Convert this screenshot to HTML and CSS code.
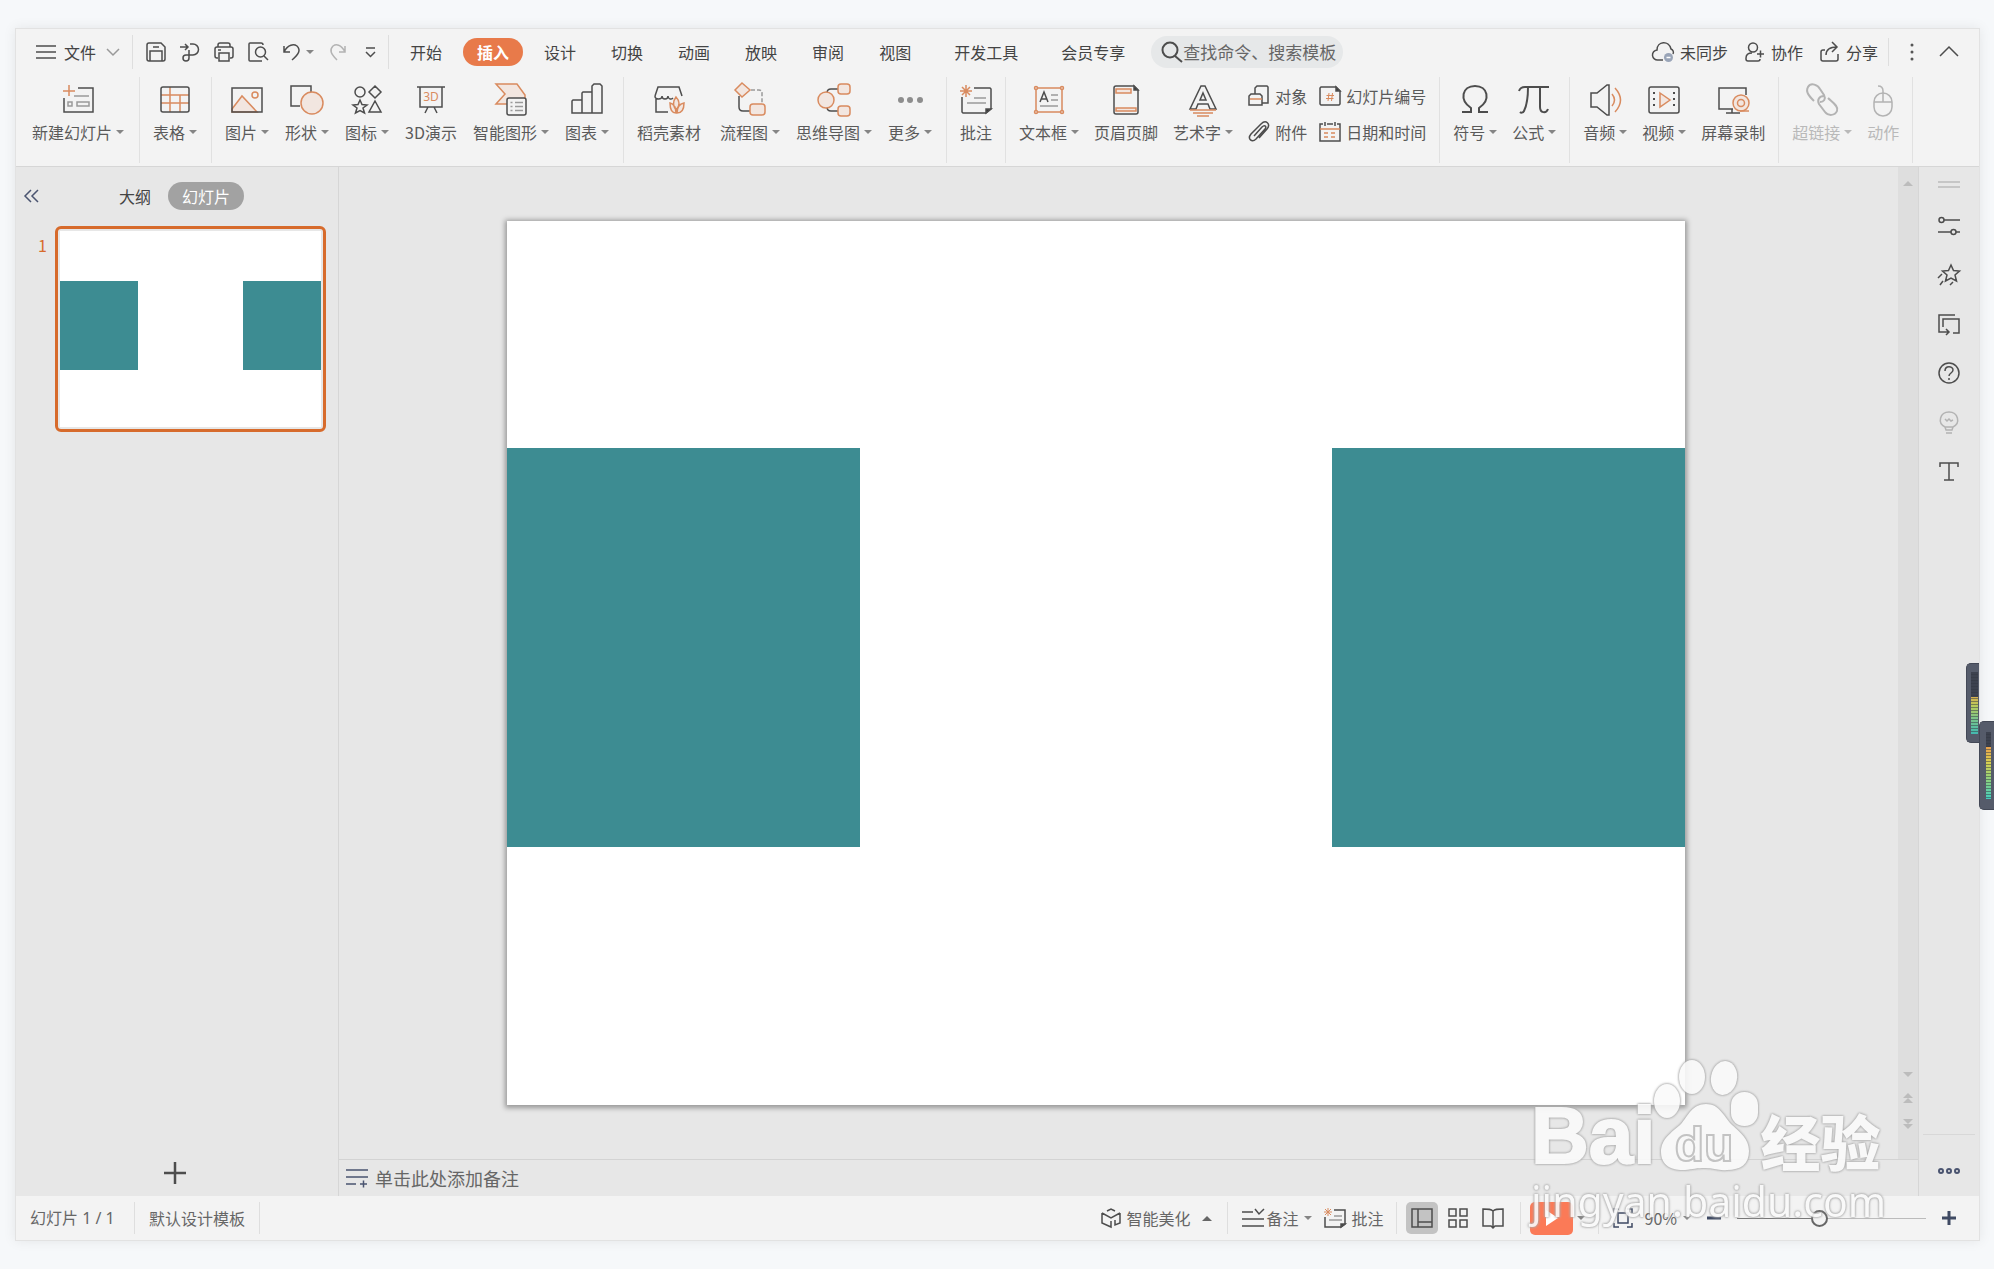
FILE: index.html
```html
<!DOCTYPE html>
<html lang="zh-CN">
<head>
<meta charset="utf-8">
<title>演示文稿</title>
<link rel="stylesheet" href="styles.css">
</head>
<body>
<div class="window">
  <header class="topbar">
    <button class="file-menu">
      <svg class="i20" viewBox="0 0 20 20"><path d="M0 4h20M0 10h20M0 16h20"/></svg>
      文件
      <svg class="chev" viewBox="0 0 14 8"><path d="M1 1l6 6 6-6"/></svg>
    </button>
    <div class="quick">
      <button aria-label="保存"><svg class="i20" viewBox="0 0 20 20"><path d="M3 1h12l4 4v12a2 2 0 0 1-2 2H3a2 2 0 0 1-2-2V3a2 2 0 0 1 2-2zM4 19V9h12v10M7 5h6"/></svg></button>
      <button aria-label="输出PDF"><svg class="i20" viewBox="0 0 20 20"><path d="M0 5h8M5 2l3 3-3 3M10 2h3a5 5 0 0 1 0 11H6a3 3 0 1 0 3 3V8"/></svg></button>
      <button aria-label="打印"><svg class="i20" viewBox="0 0 20 20"><path d="M4 5V3a2 2 0 0 1 2-2h8a2 2 0 0 1 2 2v2M4 16H3a2 2 0 0 1-2-2V7a2 2 0 0 1 2-2h14a2 2 0 0 1 2 2v7a2 2 0 0 1-2 2h-1M5 11h10v8H5zM4 8h3"/></svg></button>
      <button aria-label="打印预览"><svg class="i20" viewBox="0 0 20 20"><path d="M15 3a2 2 0 0 0-2-2H2a1 1 0 0 0-1 1v16a1 1 0 0 0 1 1h12M16 14l4 4"/><circle cx="12.500" cy="10" r="5"/></svg></button>
      <button aria-label="撤销"><svg class="i20" viewBox="0 0 20 20"><path d="M2 4v6h6M2 10C6 2 12 2 15 4c4 4 2 8-5 14"/></svg><i class="caret"></i></button>
      <button aria-label="恢复" disabled><svg class="i20" viewBox="0 0 20 20"><path d="M17 4v6h-6M17 10C13 2 8 2 5 4c-4 4-2 8 4 14"/></svg></button>
      <button aria-label="自定义"><svg class="i20" viewBox="0 0 20 20"><path d="M6 6h9M6 10l4.500 4.500L15 10"/></svg></button>
    </div>
    <nav class="tabs">
      <button>开始</button>
      <button class="active">插入</button>
      <button>设计</button>
      <button>切换</button>
      <button>动画</button>
      <button>放映</button>
      <button>审阅</button>
      <button>视图</button>
      <button class="wide">开发工具</button>
      <button class="wide">会员专享</button>
    </nav>
    <label class="search">
      <svg class="i22" viewBox="0 0 22 22"><g stroke-width="2"><circle cx="9" cy="9" r="7.500"/><path d="M14 15l7 6"/></g></svg>
      <input type="text" aria-label="搜索" placeholder="查找命令、搜索模板">
    </label>
    <div class="account">
      <button><svg class="i22" viewBox="0 0 22 22"><path d="M11 19H6a5 5 0 0 1-1-10c0-9 12-10 14-1 2 1 3 3 2 5"/><circle cx="16.500" cy="16.500" r="4.500" fill="#9aa5b8" stroke="none"/><path d="M14.500 16.500h4" stroke="#fff"/></svg>未同步</button>
      <button><svg class="i20" viewBox="0 0 20 20"><circle cx="8" cy="5.500" r="4.500"/><path d="M7 11c-4 0-6 2-6 5v1c0 1 1 2 2 2h10c1 0 2-1 2-2M12 12h7M15.500 8.500v7"/></svg>协作</button>
      <button><svg class="i20" viewBox="0 0 20 20"><path d="M5 8H3a2 2 0 0 0-2 2v7a2 2 0 0 0 2 2h13a2 2 0 0 0 2-2v-5M6 13c0-5 3-8 11-8M12 0l5 5-5 5"/></svg>分享</button>
    </div>
    <div class="win-tools">
      <button aria-label="更多"><svg class="i20" viewBox="0 0 20 20"><g fill="#555" stroke="none"><circle cx="10" cy="3" r="1.500"/><circle cx="10" cy="10" r="1.500"/><circle cx="10" cy="17" r="1.500"/></g></svg></button>
      <button aria-label="收起功能区"><svg class="i20" viewBox="0 0 20 20"><path d="M1 14l9-9 9 9"/></svg></button>
    </div>
  </header>

  <div class="ribbon">
    <div class="group">
      <button class="tool"><svg viewBox="0 0 36 36"><path d="M18 6h15v24H4V16"/><path class="o" d="M9 3v11M3 9h12"/><path class="g" d="M14 14h15M8 20h4v4H8zM17 20h12v4H17z"/></svg><span>新建幻灯片<i class="caret"></i></span></button>
    </div>
    <div class="group">
      <button class="tool"><svg viewBox="0 0 36 36"><path class="o" d="M13 5v25M23 13v17M4 13h28M4 21h28"/><rect x="4" y="5" width="28" height="25" rx="2"/></svg><span>表格<i class="caret"></i></span></button>
    </div>
    <div class="group">
      <button class="tool"><svg viewBox="0 0 36 36"><path class="of" d="M3 27l10-13 15 16H3z"/><circle class="o" cx="26" cy="13" r="3"/><rect x="3" y="6" width="30" height="24"/></svg><span>图片<i class="caret"></i></span></button>
      <button class="tool"><svg viewBox="0 0 36 36"><path d="M22 12V4H2v20h9"/><circle class="of" cx="23" cy="21" r="11"/></svg><span>形状<i class="caret"></i></span></button>
      <button class="tool"><svg viewBox="0 0 36 36"><circle cx="11" cy="10" r="5"/><path d="M26 4l6 6-6 6-6-6zM26 19l6 11H20zM11 18l2 4.500 5 .5-4 3 1.500 5-4.500-2.500L6.500 31 8 26l-4-3 5-.5z"/></svg><span>图标<i class="caret"></i></span></button>
      <button class="tool"><svg viewBox="0 0 36 36"><path d="M4 5h28M7 5v20h22V5M15 25l-3 6M21 25l3 6"/><text x="18" y="19" class="ot" font-size="12" text-anchor="middle">3D</text></svg><span>3D演示</span></button>
      <button class="tool"><svg viewBox="0 0 36 36"><path class="of" d="M3 2h21l8 11v9H3l9-10z"/><rect x="14" y="16" width="19" height="17" rx="2" fill="#f3f3f3"/><path class="g" d="M17.500 20.500h2M17.500 24.500h2M17.500 28.500h2M22 20.500h8M22 24.500h8M22 28.500h8"/></svg><span>智能图形<i class="caret"></i></span></button>
      <button class="tool"><svg viewBox="0 0 36 36"><path d="M3 31V19l1-1h9V11l1-1h9V4l2-2h6l2 2v27zM13 18v13M23 10v21"/></svg><span>图表<i class="caret"></i></span></button>
    </div>
    <div class="group assets">
      <button class="tool"><svg viewBox="0 0 36 36"><path d="M4 14l3-9h21l3 9M4 14c0 4 7 4 7 0 0 4 6 4 6 0 0 3 3 4 5 2M5 17v13h12"/><path class="of" d="M25 15c4 4 4 9 0 13-3-4-3-9 0-13zM19 21c4 1 6 5 6 10-4 0-6-4-6-10zM33 21c-5 1-7 5-7 10 5 0 7-4 7-10z"/></svg><span>稻壳素材</span></button>
      <button class="tool"><svg viewBox="0 0 36 36"><path d="M7 14v11q0 4 4 4h7"/><path class="g" stroke-dasharray="4 2" d="M19 8h8q3 0 3 3v11"/><path class="of" d="M10 1l8 7-8 7-7-7z"/><rect class="of" x="18" y="22" width="15" height="11" rx="3"/></svg><span>流程图<i class="caret"></i></span></button>
      <button class="tool"><svg viewBox="0 0 36 36"><path d="M11 11q0-4 4-4h7M11 25q0 4 4 4h7"/><circle class="of" cx="10" cy="18" r="8"/><rect class="of" x="22" y="2" width="12" height="10" rx="3"/><rect class="of" x="22" y="24" width="12" height="10" rx="3"/></svg><span>思维导图<i class="caret"></i></span></button>
      <button class="tool"><svg viewBox="0 0 36 36"><g fill="#8d8d8d" stroke="none"><circle cx="9" cy="18" r="3"/><circle cx="18" cy="18" r="3"/><circle cx="28" cy="18" r="3"/></g></svg><span>更多<i class="caret"></i></span></button>
    </div>
    <div class="group tight">
      <button class="tool"><svg viewBox="0 0 36 36"><path d="M16 6h16l1 1v20l-5 4H5l-1-1V15"/><path d="M28 31v-4h5z" fill="#333"/><path class="g" d="M16 16h12M9 21h19"/><path class="o" d="M8 3v12M2 9h12M4 5l8 8M12 5l-8 8"/></svg><span>批注</span></button>
    </div>
    <div class="group tight">
      <button class="tool"><svg viewBox="0 0 36 36"><path class="o" d="M5 6h26v24H5z"/><g class="of"><circle cx="5" cy="6" r="1.500"/><circle cx="31" cy="6" r="1.500"/><circle cx="5" cy="30" r="1.500"/><circle cx="31" cy="30" r="1.500"/></g><path d="M9 20l4-10 4 10M10.500 17h5"/><path class="g" d="M20 13h7M20 18h7M9 24h18"/></svg><span>文本框<i class="caret"></i></span></button>
      <button class="tool"><svg viewBox="0 0 36 36"><path d="M8 4h18l4 4v22a2 2 0 0 1-2 2H8a2 2 0 0 1-2-2V6a2 2 0 0 1 2-2z"/><path d="M26 4v4h4z" fill="#333"/><path class="of" d="M8 7h15v4H8zM8 26h20v3H8z"/></svg><span>页眉页脚</span></button>
      <button class="tool"><svg viewBox="0 0 36 36"><path d="M16 4h4l11 23h-6l-2-5H13l-2 5H5zM18 11l3 7h-6z"/><path class="o" d="M5 28h26M8 31h20M12 34h12"/></svg><span>艺术字<i class="caret"></i></span></button>
      <div class="small-tools">
        <button><svg class="i22" viewBox="0 0 22 22"><path d="M7 9V3l2-2h10l1 1v16h-6M3 9h9l2 2v9H1v-9z"/><path class="o" d="M2 14h12"/></svg>对象</button>
        <button><svg class="i22" viewBox="0 0 22 22"><path d="M2 2h15l4 4v13l-1 1H2l-1-1V3z"/><path d="M17 2v4h4z" fill="#333"/><path class="o" stroke-width="1" d="M10 8l-1 8M13.500 8l-1 8M7.500 10.500h7.500M7 13.500h7.500"/></svg>幻灯片编号</button>
        <button><svg class="i22" viewBox="0 0 22 22"><path d="M6 15l8-9c3-3 5 0 3 2l-9 10c-4 4-9 0-5-5L13 3c5-5 10 0 6 5l-8 9"/></svg>附件</button>
        <button><svg class="i22" viewBox="0 0 22 22"><path d="M4 3H1v17h20V3h-3M8 3h6M6 1v4M16 1v4"/><path class="o" d="M1 8h20M5 12h4M5 16h4M12 12h4M12 16h4"/></svg>日期和时间</button>
      </div>
    </div>
    <div class="group tight">
      <button class="tool"><svg viewBox="0 0 36 36"><path stroke-width="2" d="M5 30h9v-4C2 18 5 4 18 4s16 14 4 22v4h9"/></svg><span>符号<i class="caret"></i></span></button>
      <button class="tool"><svg viewBox="0 0 36 36"><path stroke-width="2" d="M3 9c1-3 3-4 6-4h24M12 5c0 12-1 18-4 24-1 2-3 2-4 1M24 5v20c0 6 6 7 8 2"/></svg><span>公式<i class="caret"></i></span></button>
    </div>
    <div class="group tight">
      <button class="tool"><svg viewBox="0 0 36 36"><path d="M4 11h6L20 3h2v30h-2l-10-8H4z"/><path class="o" d="M25 12q5 6 0 12M28 6q11 12 0 24"/></svg><span>音频<i class="caret"></i></span></button>
      <button class="tool"><svg viewBox="0 0 36 36"><rect x="3" y="5" width="30" height="26" rx="2"/><path class="of" d="M14 11l10 7-10 7z"/><path stroke-dasharray="2 4" stroke-width="2" d="M8 10v18M28 10v18"/></svg><span>视频<i class="caret"></i></span></button>
      <button class="tool"><svg viewBox="0 0 36 36"><path d="M31 13V6H4v21h14M17 27v4M11 31h14"/><circle class="of" cx="26" cy="21" r="8"/><circle class="o" cx="26" cy="21" r="3.500"/><path class="o" d="M25 29h9"/></svg><span>屏幕录制</span></button>
    </div>
    <div class="group tight">
      <button class="tool" disabled><svg viewBox="0 0 36 36"><g stroke-width="2"><path d="M10 19c-4-4-9-9-6-14s10-2 12 2l4 6c2 4 0 7-4 7"/><path d="M24 16c4 4 11 8 9 13s-9 5-12 1l-6-8c-2-4 0-8 5-8"/></g></svg><span>超链接<i class="caret"></i></span></button>
      <button class="tool" disabled><svg viewBox="0 0 36 36"><rect x="9" y="11" width="18" height="23" rx="9"/><path d="M9 20h18M18 20V9c0-3-2-5-5-5"/></svg><span>动作</span></button>
    </div>
  </div>

  <main class="work">
    <aside class="slides">
      <div class="slides-head">
        <button class="collapse" aria-label="收起"><svg class="i16" viewBox="0 0 16 16"><path d="M7 2L1 8l6 6M14 2L8 8l6 6"/></svg></button>
        <button class="outline">大纲</button>
        <button class="pill">幻灯片</button>
      </div>
      <div class="thumb-row">
        <span class="num">1</span>
        <button class="thumb" aria-label="幻灯片 1"><span class="slide mini"><b class="shape left"></b><b class="shape right"></b></span></button>
      </div>
      <button class="add" aria-label="新建幻灯片"><svg class="i22" viewBox="0 0 22 22"><path d="M11 0v22M0 11h22"/></svg></button>
    </aside>

    <section class="editor">
      <div class="stage">
        <div class="canvas">
          <div class="slide"><b class="shape left"></b><b class="shape right"></b></div>
        </div>
        <div class="scroll">
          <i class="up"></i>
          <div class="scroll-end"><i class="down"></i><span><i class="up"></i><i class="up"></i></span><span><i class="down"></i><i class="down"></i></span></div>
        </div>
      </div>
      <button class="notes"><svg class="i22" viewBox="0 0 22 22"><path d="M0 3h22M0 10h22M0 17h10M14 17h7M17.500 13.500v7"/></svg>单击此处添加备注</button>
    </section>

    <aside class="side">
      <span class="grip"></span>
      <button aria-label="属性"><svg class="i22" viewBox="0 0 22 22"><circle cx="3.500" cy="5" r="2.500"/><path d="M6 5h16M0 17h13M18 17h4"/><circle cx="15.500" cy="17" r="2.500"/></svg></button>
      <button aria-label="动画"><svg class="i22" viewBox="0 0 22 22"><path d="M13 1l2.500 5.500 6 .5-4.500 4 1.500 6-5.500-3-5.500 3L9 11 4.500 7l6-.5zM4 10l-4 4M5 17l-3 4M15 18l-3 3"/></svg></button>
      <button aria-label="切换"><svg class="i22" viewBox="0 0 22 22"><path d="M17 2H1v17h10M8 16l3 3-3 3M5 14V6h16v14h-6"/></svg></button>
      <button aria-label="帮助"><svg class="i22" viewBox="0 0 22 22"><circle cx="11" cy="11" r="10"/><path d="M7 9c0-6 8-5 8-1 0 3-4 3-4 6M11 16v2"/></svg></button>
      <button aria-label="提示" disabled><svg class="i22" viewBox="0 0 22 22"><path d="M7 16C-1 12 2 1 11 1s12 11 4 15zM7 16l1 3h6l1-3M8 22h6M7 8l2 2 2-2 2 2 2-1"/></svg></button>
      <button aria-label="文字"><svg class="i22" viewBox="0 0 22 22"><path d="M2 7V3h18v4M11 3v17M6 20h10"/></svg></button>
      <button class="more" aria-label="更多"><svg class="i22" viewBox="0 0 22 22"><g stroke-width="2"><circle cx="3" cy="11" r="2"/><circle cx="11" cy="11" r="2"/><circle cx="19" cy="11" r="2"/></g></svg></button>
    </aside>
  </main>

  <footer class="status">
    <span class="cell page">幻灯片 1 / 1</span>
    <span class="cell">默认设计模板</span>
    <div class="status-tools">
      <div class="seg beautify"><button><svg class="i20" viewBox="0 0 20 20"><path d="M6 3l4-2 4 2M1 5l9 5 9-5M1 5v10l9 4v-6M19 5v10l-5 2v-5"/></svg>智能美化<i class="caret flip"></i></button></div>
      <div class="seg annotate">
        <button><svg class="i22" viewBox="0 0 22 22"><path d="M0 5h11M13 2l4 5 5-5M0 12h22M0 19h22"/></svg>备注<i class="caret"></i></button>
        <button><svg class="i22" viewBox="0 0 22 22"><path d="M10 3h11v14l-4 3H1V10"/><path d="M17 20v-3h4z" fill="#333"/><path class="g" d="M10 9h8M5 13h13"/><path class="o" stroke-width="1" d="M4 1v8M0 5h8M1 2l6 6M7 2L1 8"/></svg>批注</button>
      </div>
      <div class="seg views">
        <button class="on" aria-label="普通视图"><svg class="i20" viewBox="0 0 20 20"><path d="M0 1h20v18H0zM6 1v18M6 14h14"/></svg></button>
        <button aria-label="浏览视图"><svg class="i20" viewBox="0 0 20 20"><path d="M1 1h7v7H1zM12 1h7v7h-7zM1 12h7v7H1zM12 12h7v7h-7z"/></svg></button>
        <button aria-label="阅读视图"><svg class="i22" viewBox="0 0 22 22"><path d="M11 4C9 2 7 2 1 2v17h8l2 2 2-2h8V2c-6 0-8 0-10 2zM11 4v16"/></svg></button>
      </div>
      <div class="seg playbox"><button class="play" aria-label="放映"><svg class="i16" viewBox="0 0 16 16"><path d="M3 0l12 8-12 8z" fill="#fff" stroke="none"/></svg></button><i class="caret"></i></div>
      <div class="zoom">
        <button aria-label="适应窗口"><svg class="i20" viewBox="0 0 20 20"><path d="M1 5V1h5M14 1h5v4M19 15v4h-5M6 19H1v-4M5 5h10v10H5z"/></svg></button>
        <button class="pct">90%<i class="caret"></i></button>
        <button aria-label="缩小"><svg class="i14" viewBox="0 0 14 14"><path stroke-width="3" d="M0 7h14"/></svg></button>
        <input type="range" min="0" max="100" value="43" aria-label="缩放">
        <button aria-label="放大"><svg class="i14" viewBox="0 0 14 14"><path stroke-width="3" d="M0 7h14M7 0v14"/></svg></button>
      </div>
    </div>
  </footer>
</div>

<div class="meter m1"><i></i></div>
<div class="meter m2"><i></i></div>

<div class="mark">
  <div class="brand">
    <span class="bai">Bai</span>
    <svg class="paw" viewBox="0 0 106 116"><g class="pads"><ellipse cx="14" cy="43" rx="13" ry="17"/><ellipse cx="39" cy="19" rx="13" ry="17"/><ellipse cx="71" cy="20" rx="13" ry="17" transform="rotate(10 71 20)"/><rect x="78" y="34" width="27" height="34" rx="13"/><path d="M53 46c-14 0-18 12-25 20C18 75 8 81 8 94c0 14 12 19 24 18 8-1 12-2 20-2s14 3 22 2c14 0 22-6 22-19 0-12-9-19-18-27-8-9-12-20-25-20z"/></g><text x="51" y="103" text-anchor="middle" class="du">du</text></svg>
    <span class="jy">经验</span>
  </div>
  <div class="url">jingyan.baidu.com</div>
</div>
</body>
</html>
```
FILE: styles.css
```css
* { box-sizing: border-box; }

body {
  margin: 0;
  min-height: 100vh;
  padding: 28px 14px 28px 15px;
  display: flex;
  background: #f6f8fa;
  color: #5a5a5a;
  font: 16px/20px "Noto Sans CJK SC", sans-serif;
  position: relative;
  overflow-x: hidden;
}

button {
  border: 0;
  padding: 0;
  background: none;
  color: inherit;
  font: inherit;
  display: flex;
  align-items: center;
  white-space: nowrap;
}

svg {
  display: block;
  flex: none;
  fill: none;
  stroke: #4d4d4d;
  stroke-width: 1.5;
  overflow: visible;
}
.i14 { width: 14px; height: 14px; }
.i16 { width: 16px; height: 16px; }
.i20 { width: 20px; height: 20px; }
.i22 { width: 22px; height: 22px; }
.o { stroke: #d98b5f; fill: none; }
.of { stroke: #d98b5f; fill: #f2e6e0; }
.g { stroke: #9a9a9a; }
.ot { fill: #d98b5f; stroke: none; font-family: "Noto Sans", sans-serif; }
button:disabled { color: #b9b9b9; }
button:disabled svg { stroke: #b3b3b3; }

.caret {
  display: inline-block;
  flex: none;
  width: 0;
  height: 0;
  border: 4px solid transparent;
  border-top-color: #858585;
  border-bottom: 0;
  margin-left: 4px;
}
button:disabled .caret { border-top-color: #b9b9b9; }
.caret.flip {
  border: 5px solid transparent;
  border-bottom-color: #666;
  border-top: 0;
}

.window {
  flex: 1;
  min-width: 0;
  display: flex;
  flex-direction: column;
  border: 1px solid #e2e2e2;
  background: #f3f3f3;
  box-shadow: 0 0 12px rgba(0, 0, 0, .08);
}

/* Menu row */
.topbar {
  display: flex;
  align-items: center;
  height: 46px;
  padding-right: 20px;
  color: #444;
}
.file-menu {
  height: 34px;
  padding: 0 12px 0 20px;
  gap: 8px;
  border-right: 1px solid #dedede;
}
.chev { width: 14px; height: 8px; margin-left: 2px; stroke: #999; }
.quick {
  display: flex;
  align-items: center;
  gap: 14px;
  height: 34px;
  padding: 0 8px 0 13px;
  border-right: 1px solid #dedede;
}
.quick button:last-child { margin-left: -2px; }
.tabs { display: flex; gap: 7px; margin-left: 7px; }
.tabs button {
  height: 28px;
  padding: 0 14px;
  border-radius: 14px;
}
.tabs .wide { margin-left: 8px; }
.tabs .active { background: #e87a4a; color: #fff; font-weight: 700; }
.search {
  display: flex;
  align-items: center;
  width: 192px;
  height: 32px;
  margin-left: 12px;
  padding-left: 10px;
  border-radius: 16px;
  background: #e6e8e9;
}
.search input {
  flex: 1;
  min-width: 0;
  border: 0;
  padding: 0;
  background: none;
  font: 17px/24px "Noto Sans CJK SC", sans-serif;
  outline: 0;
}
.search input::placeholder { color: #666; opacity: 1; }
.account { display: flex; gap: 17px; margin-left: auto; }
.account button { gap: 6px; }
.win-tools {
  display: flex;
  gap: 17px;
  height: 28px;
  margin-left: 10px;
  padding-left: 13px;
  border-left: 1px solid #dedede;
}

/* Ribbon */
.ribbon {
  display: flex;
  height: 92px;
  padding: 2px 0 3px 3px;
  border-bottom: 1px solid #d6d6d6;
}
.group {
  display: flex;
  align-items: flex-start;
  gap: 16px;
  padding: 5px 14px 0 13px;
  border-right: 1px solid #e1e1e1;
}
.group:first-child { padding-right: 15px; }
.assets .tool:first-child { margin-right: 3px; }
.tight { gap: 15px; padding-right: 13px; }
.tool { flex-direction: column; gap: 4px; }
.tool > svg { width: 36px; height: 36px; margin: 0 -2px; }
.tool span { display: flex; align-items: center; }
.small-tools {
  display: grid;
  grid-template-columns: auto auto;
  gap: 14px 12px;
  padding-top: 3px;
}
.small-tools button { gap: 5px; }

/* Work area */
.work { flex: 1; display: flex; background: #e7e7e7; min-height: 0; }
.slides {
  width: 323px;
  display: flex;
  flex-direction: column;
  border-right: 1px solid #d6d6d6;
}
.slides-head {
  display: flex;
  align-items: center;
  padding: 15px 8px 16px;
}
.outline { margin-left: 79px; color: #444; }
.pill {
  height: 28px;
  margin-left: 17px;
  padding: 0 14px;
  border-radius: 14px;
  background: #a2a2a2;
  color: #fff;
}
.collapse svg, .notes svg, .more svg { stroke: #4a5470; }
.thumb-row {
  display: flex;
  gap: 8px;
  padding: 0 12px 0 22px;
}
.num { padding-top: 9px; color: #d76b2c; width: 9px; }
.thumb {
  flex: 1;
  border: 3px solid #d76b2c;
  border-radius: 6px;
  padding: 2px;
}
.slide {
  display: block;
  position: relative;
  width: 100%;
  aspect-ratio: 4 / 3;
  background: #fff;
  box-shadow: 0 1px 5px 2px rgba(0, 0, 0, .35);
}
.slide.mini { box-shadow: none; }
.shape {
  position: absolute;
  top: 25.7%;
  width: 30%;
  height: 45.2%;
  background: #3d8c92;
}
.shape.left { left: 0; }
.shape.right { right: 0; }
.add { margin: auto auto 12px 148px; }
.add svg { stroke-width: 2.5; }

.editor { flex: 1; min-width: 0; display: flex; flex-direction: column; }
.stage { flex: 1; display: flex; }
.canvas { flex: 1; padding: 54px 213px 54px 168px; }
.scroll {
  width: 20px;
  display: flex;
  flex-direction: column;
  justify-content: space-between;
  align-items: center;
  padding: 14px 0 30px;
  background: #dedede;
}
.scroll-end { display: flex; flex-direction: column; align-items: center; gap: 16px; }
.scroll i {
  display: block;
  border: 5px solid transparent;
}
.scroll .up { border-bottom-color: #bcbcbc; border-top: 0; }
.scroll .down { border-top-color: #bcbcbc; border-bottom: 0; }
.notes {
  height: 37px;
  gap: 7px;
  padding-left: 7px;
  border-top: 1px solid #d3d3d3;
  font-size: 18px;
  color: #666;
}

.side {
  width: 61px;
  display: flex;
  flex-direction: column;
  align-items: center;
  gap: 27px;
  padding-top: 14px;
  border-left: 1px solid #d6d6d6;
}
.grip {
  width: 22px;
  height: 7px;
  border: solid #c6c6c6;
  border-width: 2px 0;
}
.side .more {
  width: 52px;
  height: 62px;
  margin-top: auto;
  justify-content: center;
  align-items: flex-start;
  border-top: 1px solid #d8d8d8;
  padding-top: 25px;
}

/* Status bar */
.status {
  display: flex;
  align-items: center;
  height: 44px;
  color: #666;
}
.cell, .seg {
  display: flex;
  align-items: center;
  height: 32px;
  padding: 0 14px;
  border-right: 1px solid #dedede;
}
.page { width: 119px; font-family: "Noto Sans", "Noto Sans CJK SC", sans-serif; }
.status-tools { display: flex; align-items: center; margin-left: auto; }
.status-tools button { gap: 5px; }
.beautify .flip { margin-left: 7px; }
.beautify { padding-right: 15px; }
.annotate { gap: 12px; padding: 0 12px 0 14px; }
.annotate button:first-child { gap: 2px; }
.views { gap: 10px; padding: 0 16px 0 9px; }
.views button:last-child { margin-left: 4px; }
.views .on {
  width: 32px;
  height: 32px;
  justify-content: center;
  border-radius: 5px;
  background: #c3c3c3;
}
.playbox { padding: 0 13px 0 9px; }
.play {
  width: 43px;
  height: 33px;
  justify-content: center;
  border-radius: 5px;
  background: #fb7a57;
}
.zoom { display: flex; align-items: center; padding: 0 23px 0 14px; gap: 16px; }
.zoom button { gap: 2px; }
.zoom svg { stroke: #3f4a63; }
.zoom button:first-child { margin-right: -4px; }
.zoom input {
  appearance: none;
  width: 189px;
  height: 20px;
  margin: 0;
  background: linear-gradient(90deg, #777 43%, #bbb 43%) center / 100% 1px no-repeat;
}
.zoom input::-webkit-slider-thumb {
  appearance: none;
  width: 17px;
  height: 17px;
  border: 2px solid #666;
  border-radius: 50%;
  background: #f3f3f3;
}

/* Floating level meters on the screen edge */
.meter {
  position: absolute;
  right: 0;
  width: 15px;
  padding: 10px 3px 10px 6px;
  border: 1px solid #434856;
  border-right: 0;
  border-radius: 5px 0 0 5px;
  background: #555b6a;
}
.meter i {
  display: block;
  height: 100%;
  background:
    repeating-linear-gradient(transparent 0 2px, rgba(50, 55, 65, .5) 2px 3px),
    linear-gradient(#3d424f 22%, #e8a04c 22%, #d9cf4f 45%, #8fd07c 70%, #43cdbd);
}
.m1 { top: 663px; right: 15px; width: 13px; height: 80px; padding: 8px 1px 8px 4px; }
.m1 i { background:
    repeating-linear-gradient(transparent 0 2px, rgba(50, 55, 65, .5) 2px 3px),
    linear-gradient(#3d424f 40%, #d9b04f 40%, #b8cc5c 55%, #7cc58a 75%, #43b8b0); }
.m2 { top: 721px; height: 89px; }

/* Watermark */
.mark {
  position: absolute;
  right: 105px;
  bottom: 41px;
  width: 358px;
  color: #fafafa;
  opacity: .9;
  pointer-events: none;
  filter: drop-shadow(0 0 1px #999) drop-shadow(0 0 1px #bbb);
}
.brand { display: flex; align-items: flex-end; }
.bai { font: 700 80px/76px "Liberation Sans", sans-serif; -webkit-text-stroke: 2px #fafafa; }
.paw { width: 106px; height: 116px; stroke: none; margin-left: -3px; }
.pads { fill: #fafafa; }
.du { fill: #fafafa; stroke: #c0c0c0; stroke-width: 2; font: 700 48px "Liberation Sans", sans-serif; }
.jy { font: 900 60px/68px "Noto Sans CJK SC", sans-serif; margin-left: 2px; }
.url { font: 41px/54px "Noto Sans", sans-serif; }
```
